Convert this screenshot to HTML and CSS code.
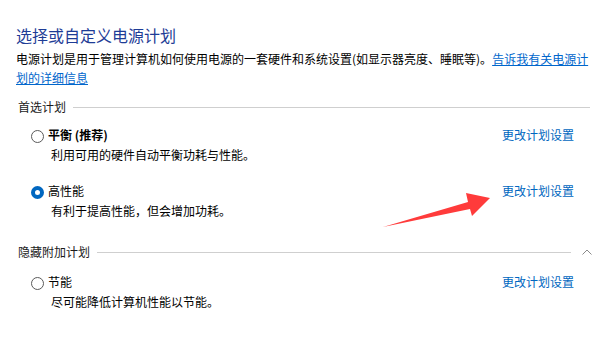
FILE: index.html
```html
<!DOCTYPE html>
<html lang="zh-CN">
<head>
<meta charset="utf-8">
<title>电源选项</title>
<link rel="stylesheet" href="styles.css">
</head>
<body>
<div class="page">
  <h1 class="title">选择或自定义电源计划</h1>
  <p class="intro">电源计划是用于管理计算机如何使用电源的一套硬件和系统设置(如显示器亮度、睡眠等)。<a class="inline-link" href="#">告诉我有关电源计</a><br><a class="inline-link" href="#">划的详细信息</a></p>

  <div class="section-head">
    <span class="section-label">首选计划</span>
    <span class="rule"></span>
  </div>

  <div class="plan">
    <span class="radio"></span>
    <span class="plan-name strong">平衡 (推荐)</span>
    <a class="plan-link" href="#">更改计划设置</a>
    <span class="plan-desc">利用可用的硬件自动平衡功耗与性能。</span>
  </div>

  <div class="plan">
    <span class="radio checked"></span>
    <span class="plan-name">高性能</span>
    <a class="plan-link" href="#">更改计划设置</a>
    <span class="plan-desc">有利于提高性能，但会增加功耗。</span>
  </div>

  <div class="section-head hidden-head">
    <span class="section-label">隐藏附加计划</span>
    <span class="rule"></span>
    <svg class="chevron" width="10" height="6" viewBox="0 0 10 6"><polyline points="0.5,5.5 5,1 9.5,5.5" fill="none" stroke="#8a8a8a" stroke-width="1"/></svg>
  </div>

  <div class="plan">
    <span class="radio"></span>
    <span class="plan-name">节能</span>
    <a class="plan-link" href="#">更改计划设置</a>
    <span class="plan-desc">尽可能降低计算机性能以节能。</span>
  </div>

  <svg class="arrow" width="600" height="341" viewBox="0 0 600 341">
    <polygon points="383,227 468,202 466,193 490,198 472,216 470,209" fill="#ff3b3b"/>
  </svg>
</div>
</body>
</html>
```

FILE: styles.css
```css
html, body {
  margin: 0;
  padding: 0;
  background: #ffffff;
}

body {
  font-family: "Noto Sans CJK SC", "Noto Sans", sans-serif;
  font-size: 12px;
  color: #000000;
}

.page {
  position: relative;
  width: 574px;
  padding: 23px 10px 0 16px;
}

.title {
  margin: 0;
  font-size: 16px;
  line-height: 24px;
  font-weight: normal;
  color: #1e3c96;
}

.intro {
  margin: 3px 0 0 0;
  line-height: 18.5px;
}

.inline-link {
  color: #0066cc;
  text-decoration: underline;
}

.section-head {
  display: flex;
  align-items: center;
  margin-top: 10px;
  padding-left: 2px;
  line-height: 20px;
  color: #1a1a1a;
}

.section-label {
  white-space: nowrap;
}

.rule {
  flex: 1;
  height: 1px;
  margin-left: 7px;
  background: #cfcfcf;
}

.hidden-head {
  margin-top: 21px;
  margin-right: -2px;
}

.chevron {
  margin-left: 11px;
  display: block;
}

.plan {
  display: grid;
  grid-template-columns: 13px 1fr auto;
  column-gap: 4px;
  align-items: center;
  margin-top: 8px;
  padding-left: 15px;
  padding-right: 16px;
  line-height: 20px;
}

.plan + .plan {
  margin-top: 16px;
}

.hidden-head + .plan {
  margin-top: 10px;
}

.radio {
  box-sizing: border-box;
  width: 13px;
  height: 13px;
  border: 1px solid #5a5a5a;
  border-radius: 50%;
  background: #ffffff;
  margin-top: 2px;
}

.radio.checked {
  border: 4px solid #0067c0;
  background: #ffffff;
}

.plan-name {
  color: #000000;
}

.strong {
  font-weight: bold;
}

.plan-link {
  color: #0067c0;
  text-decoration: none;
}

.plan-desc {
  grid-column: 2 / 4;
  padding-left: 3px;
}

.arrow {
  position: absolute;
  left: 0;
  top: 0;
  pointer-events: none;
}
```
